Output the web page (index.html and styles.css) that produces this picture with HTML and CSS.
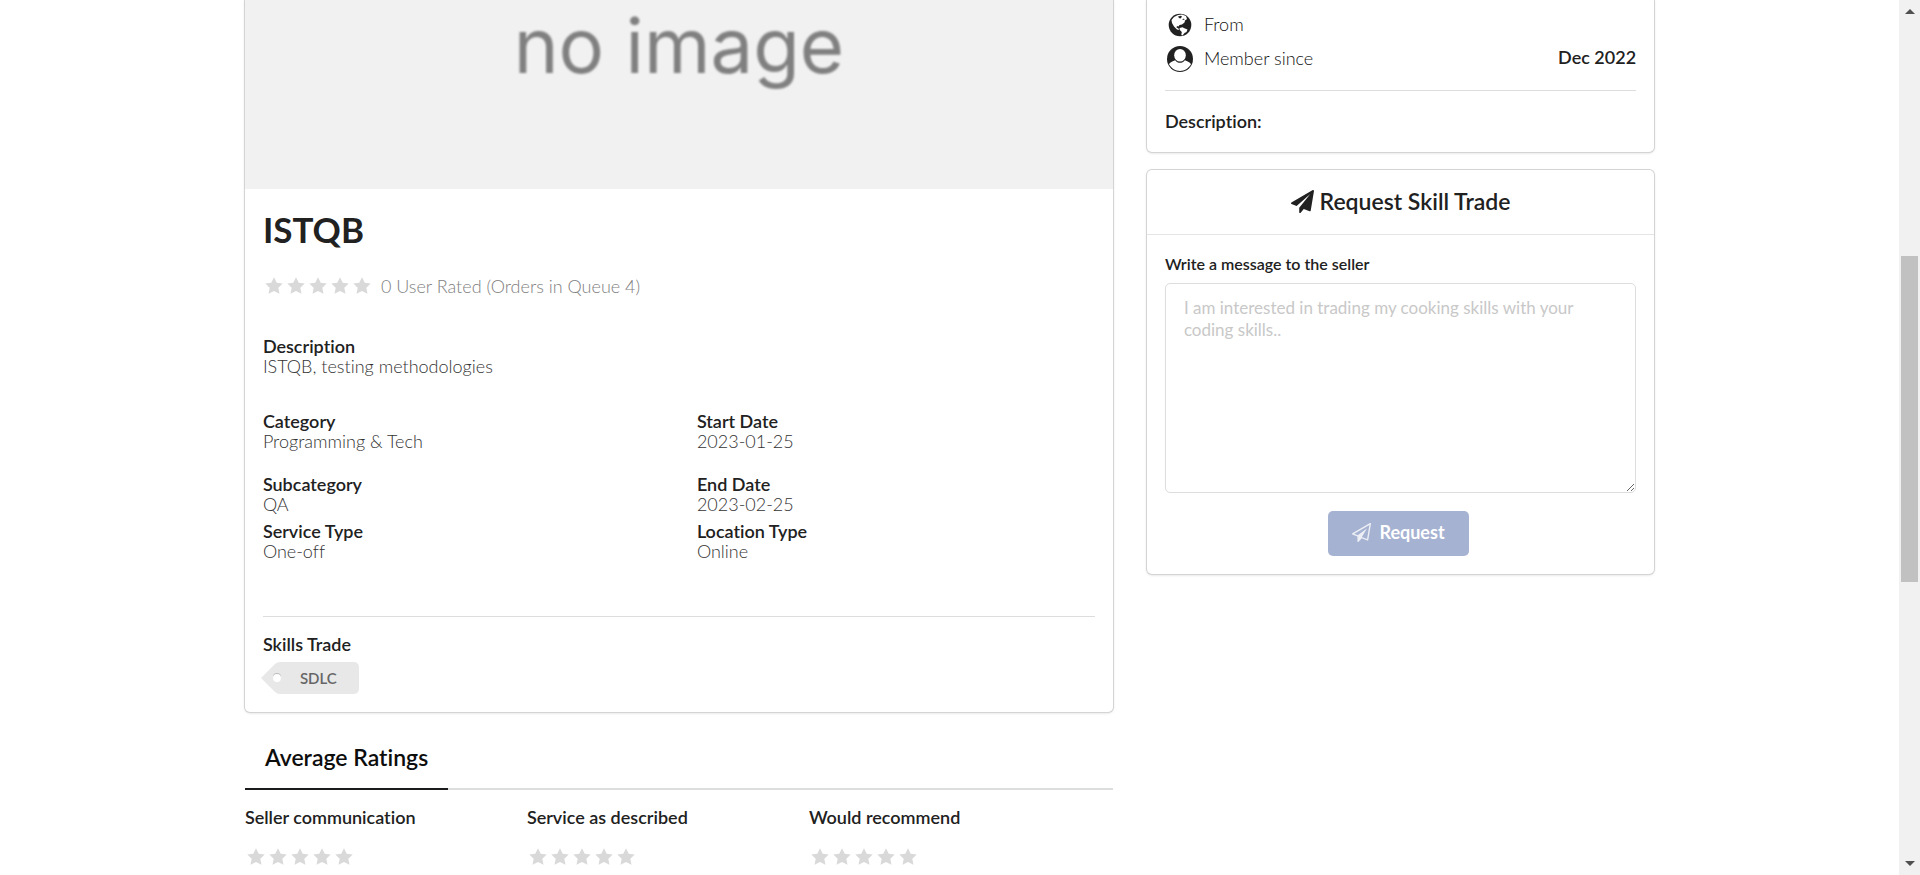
FILE: index.html
```html
<!DOCTYPE html>
<html lang="en">
<head>
<meta charset="utf-8">
<title>ISTQB</title>
<link rel="stylesheet" href="styles.css">
</head>
<body>
<svg class="sprite" aria-hidden="true">
  <symbol id="star" viewBox="0 0 18 18"><path d="M9 0.300l2.700 5.500 6 .8-4.400 4.200 1.200 6L9 13.900l-5.500 2.900 1.200-6L.3 6.600l6-.8z"/></symbol>
  <symbol id="stars" viewBox="0 0 106 18">
    <use href="#star" x="0" width="18" height="18"/><use href="#star" x="22" width="18" height="18"/><use href="#star" x="44" width="18" height="18"/><use href="#star" x="66" width="18" height="18"/><use href="#star" x="88" width="18" height="18"/>
  </symbol>
</svg>
<div class="page">
  <div class="viewport">
  <main class="container">
    <div class="main-col">
      <article class="card service">
        <div class="picture"><span class="picture-text">no image</span></div>
        <div class="service-body">
          <h1 class="title">ISTQB</h1>
          <div class="rating-line">
            <svg class="stars" role="img" aria-label="0 of 5 stars"><use href="#stars"/></svg>
            <span class="rated">0 User Rated (Orders in Queue 4)</span>
          </div>
          <dl class="facts">
            <div class="fact wide"><dt>Description</dt><dd>ISTQB, testing methodologies</dd></div>
            <div class="fact spaced"><dt>Category</dt><dd>Programming &amp; Tech</dd></div>
            <div class="fact spaced"><dt>Start Date</dt><dd>2023-01-25</dd></div>
            <div class="fact"><dt>Subcategory</dt><dd>QA</dd></div>
            <div class="fact"><dt>End Date</dt><dd>2023-02-25</dd></div>
            <div class="fact"><dt>Service Type</dt><dd>One-off</dd></div>
            <div class="fact"><dt>Location Type</dt><dd>Online</dd></div>
          </dl>
          <hr class="rule">
          <h2 class="skills-title">Skills Trade</h2>
          <span class="tag"><svg class="tag-tip" viewBox="0 0 25 32"><path d="M25 0H19Q16 0 14 2L0 16 14 30Q16 32 19 32H25Z" fill="#e8e8e8"/><circle cx="16" cy="15" r="4" fill="#bababa"/><circle cx="16" cy="16" r="4" fill="#fff"/></svg><span class="tag-text">SDLC</span></span>
        </div>
      </article>
      <section class="ratings">
        <div class="tabs"><a class="tab" href="#ratings">Average Ratings</a></div>
        <div class="rating-grid" id="ratings">
          <div class="rating"><h3 class="rating-name">Seller communication</h3><svg class="stars" role="img" aria-label="0 of 5 stars"><use href="#stars"/></svg></div>
          <div class="rating"><h3 class="rating-name">Service as described</h3><svg class="stars" role="img" aria-label="0 of 5 stars"><use href="#stars"/></svg></div>
          <div class="rating"><h3 class="rating-name">Would recommend</h3><svg class="stars" role="img" aria-label="0 of 5 stars"><use href="#stars"/></svg></div>
        </div>
      </section>
    </div>
    <aside class="side-col">
      <section class="card seller">
        <div class="seller-row">
          <svg class="seller-icon" viewBox="0 0 26 26"><circle cx="13" cy="13" r="11.300" fill="#212121"/><path d="M4.500 8L7 5l4-2 4-.4 4 1.400 1 3-2 1.500-.5 2-2.500 2-2.500.5-1 1.500-1.500-.5-.5 1.500 2 1 .5 1.500-2-.5-3-3-2-3.500z" fill="#fff"/><path d="M12.500 16l3-.8 2.500 1.300 2.500 1-1 2.500-2 1-2 2.500-1.200-.5.5-3-2-2z" fill="#fff"/><path d="M11 4.500l3-.7 1 1-1.500 1.700-1.500-.5zM15 7.500l2-1 .5 1.500z" fill="#212121"/></svg>
          <span class="seller-label">From</span>
        </div>
        <div class="seller-row">
          <svg class="seller-icon" viewBox="0 0 26 26"><circle cx="13" cy="13" r="13" fill="#212121"/><path d="M8.200 14.200C4.500 15.400 2.500 17 2 18.300 4.500 22.600 8.500 24.900 13 24.900s8.500-2.300 11-6.600c-.5-1.300-2.500-2.900-6.200-4.100C16.500 16 14.800 16.800 13 16.800s-3.500-.8-4.800-2.600z" fill="#fff"/><ellipse cx="13" cy="9.300" rx="5.800" ry="6.300" fill="#fff"/></svg>
          <span class="seller-label">Member since</span><span class="seller-value">Dec 2022</span>
        </div>
        <hr class="rule">
        <h2 class="seller-desc">Description:</h2>
      </section>
      <section class="card request">
        <h2 class="request-title"><svg class="plane" viewBox="0 0 1792 1792"><path fill="currentColor" d="M1764 11q33 24 27 64l-256 1536q-5 29-32 45-14 8-31 8-11 0-24-5l-453-185-242 295q-18 23-49 23-13 0-22-4-19-7-30.500-23.500t-11.500-36.500v-349l864-1059-1069 925-395-162q-37-14-40-55-2-40 32-59l1664-960q15-9 32-9 20 0 36 11z"/></svg>Request Skill Trade</h2>
        <form class="request-form">
          <label class="field-label" for="message">Write a message to the seller</label>
          <textarea class="message" id="message" placeholder="I am interested in trading my cooking skills with your coding skills.."></textarea>
          <button class="send" type="button"><svg class="send-icon" viewBox="0 0 1792 1792"><path fill="currentColor" d="M1764 11q33 24 27 64l-256 1536q-5 29-32 45-14 8-31 8-11 0-24-5l-527-215-298 327q-18 21-47 21-14 0-23-4-19-7-30-23.500t-11-36.500v-452l-472-193q-37-14-40-55-3-39 32-59l1664-960q35-21 68 2zm-342 1499l221-1323-1434 827 336 137 863-639-478 797z"/></svg>Request</button>
        </form>
      </section>
    </aside>
  </main>
  </div>
  <div class="scrollbar" aria-hidden="true">
    <svg class="arrow" viewBox="0 0 10 5"><path d="M5 0l5 5H0z"/></svg>
    <div class="thumb"></div>
    <svg class="arrow" viewBox="0 0 10 5"><path d="M5 5l5-5H0z"/></svg>
  </div>
</div>
</body>
</html>
```
FILE: styles.css
```css
* { box-sizing: border-box; }
body { margin: 0; background: #fff; color: #212121; font: 400 18px/20px Lato, "Liberation Sans", sans-serif; font-variant-ligatures: none; }
h1, h2, h3, dl, dd { margin: 0; font-weight: 600; }
svg { display: block; flex: none; }
.sprite { position: absolute; width: 0; height: 0; }
.page { display: flex; height: 100vh; overflow: hidden; }
.viewport { flex: 1; }
.container { display: flex; width: 76%; margin: 0 auto; }
.main-col, .side-col { padding: 0 17px; }
.main-col { width: 62.5%; }
.side-col { width: 37.5%; }
.card { border-radius: 5px; box-shadow: 0 1px 3px 0 #d4d4d5, 0 0 0 1px #d4d4d5; background: #fff; }
.rule { height: 1px; margin: 0; border: 0; background: #dcdddd; }

.service { border-radius: 0 0 5px 5px; }
.picture { display: flex; justify-content: center; height: 189px; background: #f1f1f1; }
.picture-text { color: #808080; font-family: Inter, "Liberation Sans", sans-serif; font-size: 76px; font-weight: 400; line-height: 90px; filter: blur(1px); }
.service-body { padding: 18px 18px 18px; }
.title { font-size: 35px; font-weight: 700; line-height: 44px; }
.rating-line { display: flex; align-items: center; gap: 10px; margin-top: 23px; }
.stars { width: 106px; height: 18px; margin-left: 2px; fill: #d9d9d9; }
.rated { color: #808080; font-weight: 300; line-height: 24px; }
.facts { display: grid; grid-template-columns: 1fr 1fr; gap: 7px 36px; padding: 38px 0 55px; }
.fact dt { font-weight: 600; }
.fact dd { color: #333; font-weight: 300; }
.fact.wide { grid-column: 1 / -1; padding-bottom: 28px; }
.fact.spaced { padding-bottom: 16px; }
.skills-title { margin: 17px 0 8px; font-size: 18px; line-height: 20px; }
.tag { display: flex; width: max-content; margin-left: -2px; }
.tag-tip { width: 25px; height: 32px; }
.tag-text { padding: 0 22px 0 14px; border-radius: 0 5px 5px 0; background: #e8e8e8; color: #666; font-size: 15px; font-weight: 600; line-height: 32px; }

.ratings { margin-top: 29px; }
.tabs { display: flex; border-bottom: 2px solid #dcdddd; }
.tab { margin-bottom: -2px; padding: 0 20px 15px; border-bottom: 2px solid #1b1c1d; color: #0d0d0d; font-size: 23px; font-weight: 600; line-height: 32px; text-decoration: none; }
.rating-grid { display: grid; grid-template-columns: repeat(3, 1fr); margin-top: 17px; margin-right: 22px; }
.rating-name { font-size: 18px; line-height: 20px; }
.rating .stars { margin-top: 21px; }

.seller { padding: 8px 18px 21px; border-radius: 0 0 5px 5px; }
.seller-row { display: flex; align-items: center; height: 34px; }
.seller-icon { width: 26px; height: 26px; margin-left: 2px; }
.seller-label { margin-left: 11px; padding-bottom: 3px; color: #111; font-weight: 300; }
.seller-value { margin-left: auto; padding-bottom: 5px; font-weight: 600; }
.seller .rule { margin-top: 14px; }
.seller-desc { margin-top: 20px; font-size: 18px; line-height: 20px; }
.request { margin-top: 18px; }
.request-title { display: flex; align-items: center; justify-content: center; gap: 6px; height: 65px; padding-bottom: 2px; border-bottom: 1px solid #e5e5e5; font-size: 23px; line-height: 32px; }
.plane { width: 23px; height: 23px; }
.request-form { display: flex; flex-direction: column; padding: 19px 18px 18px; }
.field-label { font-size: 16px; font-weight: 600; line-height: 20px; }
.message { height: 210px; margin: 9px 0 18px; padding: 13px 18px; border: 1px solid #dcdddd; border-radius: 5px; color: #212121; font: 400 17px/22px Lato, "Liberation Sans", sans-serif; resize: vertical; }
.message::placeholder { color: #c8c8c8; }
.send { display: flex; align-items: center; align-self: center; gap: 8px; height: 45px; margin-right: 4px; padding: 0 24px 3px; border: 0; border-radius: 5px; background: #a6b2d1; color: #fff; font: 700 18px/20px Lato, "Liberation Sans", sans-serif; }
.send-icon { width: 19px; height: 19px; opacity: .8; }

.scrollbar { display: flex; flex: none; flex-direction: column; align-items: center; width: 21px; padding: 9px 0; background: #f1f1f1; }
.arrow { width: 10px; height: 5px; fill: #505050; }
.thumb { width: 17px; height: 38%; margin: 242px 0 auto; background: #c1c1c1; }
```
